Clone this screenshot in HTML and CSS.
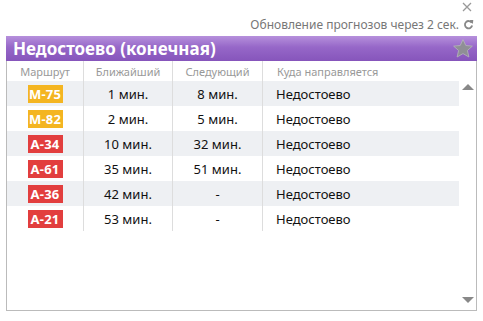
FILE: index.html
```html
<!DOCTYPE html>
<html lang="ru">
<head>
    <meta charset="UTF-8">
    <title>Прогноз</title>
    <link rel="stylesheet" href="styles.css">
</head>
<body>

<div class="top">
    <svg class="close" width="10" height="10" viewBox="0 0 10 10"><path d="M1 1l8 8M9 1l-8 8" stroke="#999" stroke-width="1.3"/></svg>
    <div class="refresh">
        Обновление прогнозов через 2 сек.
        <svg width="11" height="11" viewBox="0 0 12 12"><path d="M9.6 4.2A4 4 0 1 0 10 7.2" fill="none" stroke="#888" stroke-width="2"/><path d="M7 1l4.2 0.2-0.4 4.2z" fill="#888"/></svg>
    </div>
</div>

<div id="stop">
    <div class="title">
        <span>Недостоево (конечная)</span>
        <svg class="star" width="20" height="19" viewBox="0 0 20 19"><path d="M10 0.5l2.8 6 6.6 0.6-5 4.4 1.5 6.5L10 14.6 4.1 18l1.5-6.5-5-4.4 6.6-0.6z" fill="#8f8f95" stroke="#b6b6bb" stroke-width="0.8"/></svg>
    </div>
    <div class="body">
        <div class="list">
            <div class="row head">
                <div class="c route">Маршрут</div>
                <div class="c near">Ближайший</div>
                <div class="c next">Следующий</div>
                <div class="c dest">Куда направляется</div>
            </div>
            <div class="row odd">
                <div class="c route"><span class="badge m">М-75</span></div>
                <div class="c near">1 мин.</div>
                <div class="c next">8 мин.</div>
                <div class="c dest">Недостоево</div>
            </div>
            <div class="row">
                <div class="c route"><span class="badge m">М-82</span></div>
                <div class="c near">2 мин.</div>
                <div class="c next">5 мин.</div>
                <div class="c dest">Недостоево</div>
            </div>
            <div class="row odd">
                <div class="c route"><span class="badge a">А-34</span></div>
                <div class="c near">10 мин.</div>
                <div class="c next">32 мин.</div>
                <div class="c dest">Недостоево</div>
            </div>
            <div class="row">
                <div class="c route"><span class="badge a">А-61</span></div>
                <div class="c near">35 мин.</div>
                <div class="c next">51 мин.</div>
                <div class="c dest">Недостоево</div>
            </div>
            <div class="row odd">
                <div class="c route"><span class="badge a">А-36</span></div>
                <div class="c near">42 мин.</div>
                <div class="c next">-</div>
                <div class="c dest">Недостоево</div>
            </div>
            <div class="row">
                <div class="c route"><span class="badge a">А-21</span></div>
                <div class="c near">53 мин.</div>
                <div class="c next">-</div>
                <div class="c dest">Недостоево</div>
            </div>
        </div>
        <div class="scroll">
            <div class="arrow up"></div>
            <div class="arrow down"></div>
        </div>
    </div>
</div>

</body>
</html>
```

FILE: styles.css
```css
body {
    margin: 0;
    padding: 0 6px 10px 6px;
    width: 471px;
    font-family: "Noto Sans", "Open Sans", sans-serif;
    background: #fff;
    color: #111;
}

.top {
    height: 36px;
    display: flex;
    flex-direction: column;
    align-items: flex-end;
}

.close {
    margin-top: 2px;
    margin-right: 5px;
}

.refresh {
    margin-top: 4px;
    display: flex;
    align-items: center;
    gap: 4px;
    padding-right: 3px;
    font-size: 12px;
    color: #777;
}

#stop {
    border: 1px solid #bbb;
    border-top: none;
}

.title {
    height: 25px;
    margin: 0 -1px;
    padding: 0 4px 0 7px;
    display: flex;
    align-items: center;
    justify-content: space-between;
    background: linear-gradient(#b690dc, #9667c8 45%, #8655bb);
    color: #fff;
    font-size: 17px;
    font-weight: bold;
}

.body {
    display: flex;
    height: 249px;
}

.list {
    flex: 1;
}

.row {
    display: flex;
    height: 25px;
    align-items: center;
    font-size: 13px;
}

.row.odd {
    background: #eef0f3;
}

.row.head {
    height: 20px;
    font-size: 11px;
    color: #999;
}

.c {
    height: 100%;
    display: flex;
    align-items: center;
    justify-content: center;
    border-right: 1px solid #ddd;
}

.route { width: 76px; }
.near { width: 88px; }
.next { width: 89px; }

.dest {
    flex: 1;
    border-right: none;
    justify-content: flex-start;
    padding-left: 13px;
}

.row.head .dest {
    padding-left: 14px;
}

.badge {
    width: 35px;
    height: 18px;
    line-height: 18px;
    text-align: center;
    color: #fff;
    font-weight: bold;
    font-size: 13px;
    letter-spacing: 0.2px;
}

.badge.m { background: #f4b521; }
.badge.a { background: #e23e3e; }

.scroll {
    width: 17px;
    display: flex;
    flex-direction: column;
    justify-content: space-between;
    align-items: center;
    padding: 23px 0 7px;
}

.arrow {
    width: 0;
    height: 0;
    border-left: 6px solid transparent;
    border-right: 6px solid transparent;
}

.arrow.up { border-bottom: 6px solid #888; }
.arrow.down { border-top: 6px solid #888; }
```
